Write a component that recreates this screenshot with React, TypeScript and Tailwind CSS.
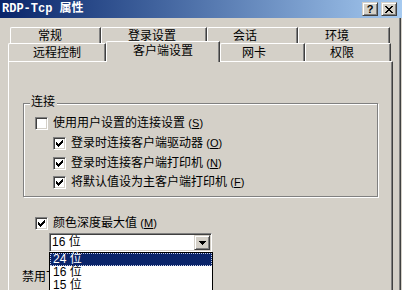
import React from "react";

const FONT = '"Liberation Sans", "Noto Sans CJK SC", sans-serif';

function CheckMark() {
  const rects: [number, number, number][] = [
    [6, 0, 1],
    [5, 1, 2],
    [0, 2, 1],
    [4, 2, 3],
    [0, 3, 2],
    [3, 3, 3],
    [0, 4, 5],
    [1, 5, 3],
    [2, 6, 1],
  ];
  return (
    <svg width="7" height="7" viewBox="0 0 7 7" shapeRendering="crispEdges">
      {rects.map(([x, y, w], i) => (
        <rect key={i} x={x} y={y} width={w} height={1} fill="#000" />
      ))}
    </svg>
  );
}

function Check({ checked }: { checked: boolean }) {
  return (
    <div className="w-[13px] h-[13px] shrink-0 bg-white border border-t-[#808080] border-l-[#808080] border-r-white border-b-white shadow-[inset_1px_1px_0_#404040,inset_-1px_-1px_0_#d4d0c8] flex items-center justify-center">
      {checked && <CheckMark />}
    </div>
  );
}

function CloseGlyph() {
  const rects: [number, number, number][] = [
    [0, 0, 2],
    [6, 0, 2],
    [1, 1, 2],
    [5, 1, 2],
    [2, 2, 4],
    [3, 3, 2],
    [2, 4, 4],
    [1, 5, 2],
    [5, 5, 2],
    [0, 6, 2],
    [6, 6, 2],
  ];
  return (
    <svg width="8" height="7" viewBox="0 0 8 7" shapeRendering="crispEdges">
      {rects.map(([x, y, w], i) => (
        <rect key={i} x={x} y={y} width={w} height={1} fill="#000" />
      ))}
    </svg>
  );
}

function Mn({ pre, k }: { pre: string; k: string }) {
  return (
    <span>
      {pre} <span className="text-[11px]">(<span className="underline">{k}</span>)</span>
    </span>
  );
}

function Tab({
  label,
  w,
  pl,
  h,
  pt,
}: {
  label: string;
  w: string;
  pl: string;
  h: string;
  pt: string;
}) {
  return (
    <div
      className={`${w} ${h} ${pt} ${pl} shrink-0 border-t border-l border-r border-t-white border-l-white border-r-[#404040] rounded-tl-[2px] shadow-[inset_-1px_0_0_#808080] text-[12px] leading-[12px] text-black whitespace-nowrap`}
    >
      {label}
    </div>
  );
}

export default function App() {
  return (
    <div
      className="relative w-[402px] h-[290px] overflow-hidden bg-[#d4d0c8] flex flex-col"
      style={{ fontFamily: FONT }}
    >
      {/* Title bar */}
      <div className="h-[18px] shrink-0 flex items-center justify-between pl-[2px] pr-[5px] bg-gradient-to-r from-[#0a246a] to-[#a6caf0]">
        <div
          className="text-white font-bold text-[12px] leading-[14px] whitespace-pre"
          style={{ fontFamily: '"Liberation Mono", "Noto Sans CJK SC", monospace' }}
        >
          RDP-Tcp 属性
        </div>
        <div className="flex gap-[3px]">
          <div className="w-[16px] h-[14px] bg-[#d4d0c8] border border-t-[#d4d0c8] border-l-[#d4d0c8] border-r-[#404040] border-b-[#404040] shadow-[inset_1px_1px_0_#fff,inset_-1px_-1px_0_#808080] flex items-center justify-center">
            <span className="font-bold text-[11px] leading-[11px] text-black" style={{ fontFamily: '"Liberation Sans", sans-serif' }}>
              ?
            </span>
          </div>
          <div className="w-[16px] h-[14px] bg-[#d4d0c8] border border-t-[#d4d0c8] border-l-[#d4d0c8] border-r-[#404040] border-b-[#404040] shadow-[inset_1px_1px_0_#fff,inset_-1px_-1px_0_#808080] flex items-center justify-center">
            <CloseGlyph />
          </div>
        </div>
      </div>

      {/* Body */}
      <div className="flex-1 flex">
        <div className="w-[399px] flex flex-col pt-[9px] pl-[8px]">
          {/* Tab row 1 */}
          <div className="flex ml-[2px] h-[16px]">
            <Tab label="常规" w="w-[91px]" h="h-[16px]" pt="pt-[2px]" pl="pl-[27px]" />
            <Tab label="登录设置" w="w-[106px]" h="h-[16px]" pt="pt-[2px]" pl="pl-[26px]" />
            <Tab label="会话" w="w-[91px]" h="h-[16px]" pt="pt-[2px]" pl="pl-[25px]" />
            <Tab label="环境" w="w-[92px]" h="h-[16px]" pt="pt-[2px]" pl="pl-[26px]" />
          </div>
          {/* Tab row 2 */}
          <div className="flex items-start h-[18px] relative z-10">
            <Tab label="远程控制" w="w-[98px]" h="h-[18px]" pt="pt-[3px]" pl="pl-[24px]" />
            <div className="w-[114px] h-[21px] -mt-[2px] shrink-0 bg-[#d4d0c8] pt-[3px] pl-[26px] border-t border-l border-r border-t-white border-l-white border-r-[#404040] rounded-tl-[2px] shadow-[inset_-1px_0_0_#808080] text-[12px] leading-[12px] text-black whitespace-nowrap">
              客户端设置
            </div>
            <Tab label="网卡" w="w-[85px]" h="h-[18px]" pt="pt-[3px]" pl="pl-[21px]" />
            <Tab label="权限" w="w-[86px]" h="h-[18px]" pt="pt-[3px]" pl="pl-[24px]" />
          </div>

          {/* Panel */}
          <div className="w-[385px] flex-1 border-t border-l border-r border-t-white border-l-white border-r-[#404040] shadow-[inset_-1px_0_0_#808080] flex flex-col pl-[14px] text-[12px] leading-[13px] text-black">
            {/* Group box */}
            <div className="relative mt-[41px] w-[355px] h-[94px] border border-[#808080] shadow-[inset_1px_1px_0_#fff,1px_1px_0_#fff] flex flex-col pt-[13px] pl-[11px]">
              <div className="absolute left-[6px] -top-[8px] pl-[1px] pr-[2px] bg-[#d4d0c8] leading-[13px]">
                连接
              </div>
              <div className="flex items-start h-[20px]">
                <Check checked={false} />
                <span className="ml-[5px] whitespace-nowrap">
                  <Mn pre="使用用户设置的连接设置" k="S" />
                </span>
              </div>
              <div className="flex items-start h-[20px] ml-[18px]">
                <Check checked />
                <span className="ml-[5px] whitespace-nowrap">
                  <Mn pre="登录时连接客户端驱动器" k="O" />
                </span>
              </div>
              <div className="flex items-start h-[19px] ml-[18px]">
                <Check checked />
                <span className="ml-[5px] whitespace-nowrap">
                  <Mn pre="登录时连接客户端打印机" k="N" />
                </span>
              </div>
              <div className="flex items-start h-[19px] ml-[18px]">
                <Check checked />
                <span className="ml-[5px] whitespace-nowrap">
                  <Mn pre="将默认值设为主客户端打印机" k="F" />
                </span>
              </div>
            </div>

            {/* Color depth */}
            <div className="flex items-start mt-[20px] ml-[12px] h-[13px]">
              <Check checked />
              <span className="ml-[5px] whitespace-nowrap">
                <Mn pre="颜色深度最大值" k="M" />
              </span>
            </div>

            {/* Combo */}
            <div className="ml-[26px] mt-[3px] w-[163px] h-[19px] flex bg-white p-[1px] border border-t-[#808080] border-l-[#808080] border-r-white border-b-white shadow-[inset_1px_1px_0_#404040,inset_-1px_-1px_0_#d4d0c8]">
              <div className="flex-1 pl-[1px] pt-[1px] leading-[13px] whitespace-pre">16 位</div>
              <div className="w-[16px] h-[15px] bg-[#d4d0c8] border border-t-[#d4d0c8] border-l-[#d4d0c8] border-r-[#404040] border-b-[#404040] shadow-[inset_1px_1px_0_#fff,inset_-1px_-1px_0_#808080] flex items-center justify-center">
                <svg width="7" height="4" viewBox="0 0 7 4" shapeRendering="crispEdges">
                  <rect x="0" y="0" width="7" height="1" fill="#000" />
                  <rect x="1" y="1" width="5" height="1" fill="#000" />
                  <rect x="2" y="2" width="3" height="1" fill="#000" />
                  <rect x="3" y="3" width="1" height="1" fill="#000" />
                </svg>
              </div>
            </div>

            <div className="mt-[19px] -ml-[1px] whitespace-nowrap">禁用下列:</div>
          </div>
        </div>
        <div className="w-[1px] bg-[#808080]" />
        <div className="w-[1px] bg-[#404040]" />
        <div className="w-[1px] bg-[#d4d0c8]" />
      </div>

      {/* Dropdown list */}
      <div className="absolute left-[49px] top-[252px] w-[164px] h-[42px] bg-white border border-black text-[12px] text-black z-20 flex flex-col">
        <div className="h-[13px] shrink-0 bg-[#0a246a] text-white border border-dotted border-[#c8d0e8] pl-[2px] leading-[11px] whitespace-pre">
          24 位
        </div>
        <div className="h-[13px] shrink-0 pl-[3px] leading-[13px] whitespace-pre">16 位</div>
        <div className="h-[13px] shrink-0 pl-[3px] leading-[13px] whitespace-pre">15 位</div>
      </div>
    </div>
  );
}
